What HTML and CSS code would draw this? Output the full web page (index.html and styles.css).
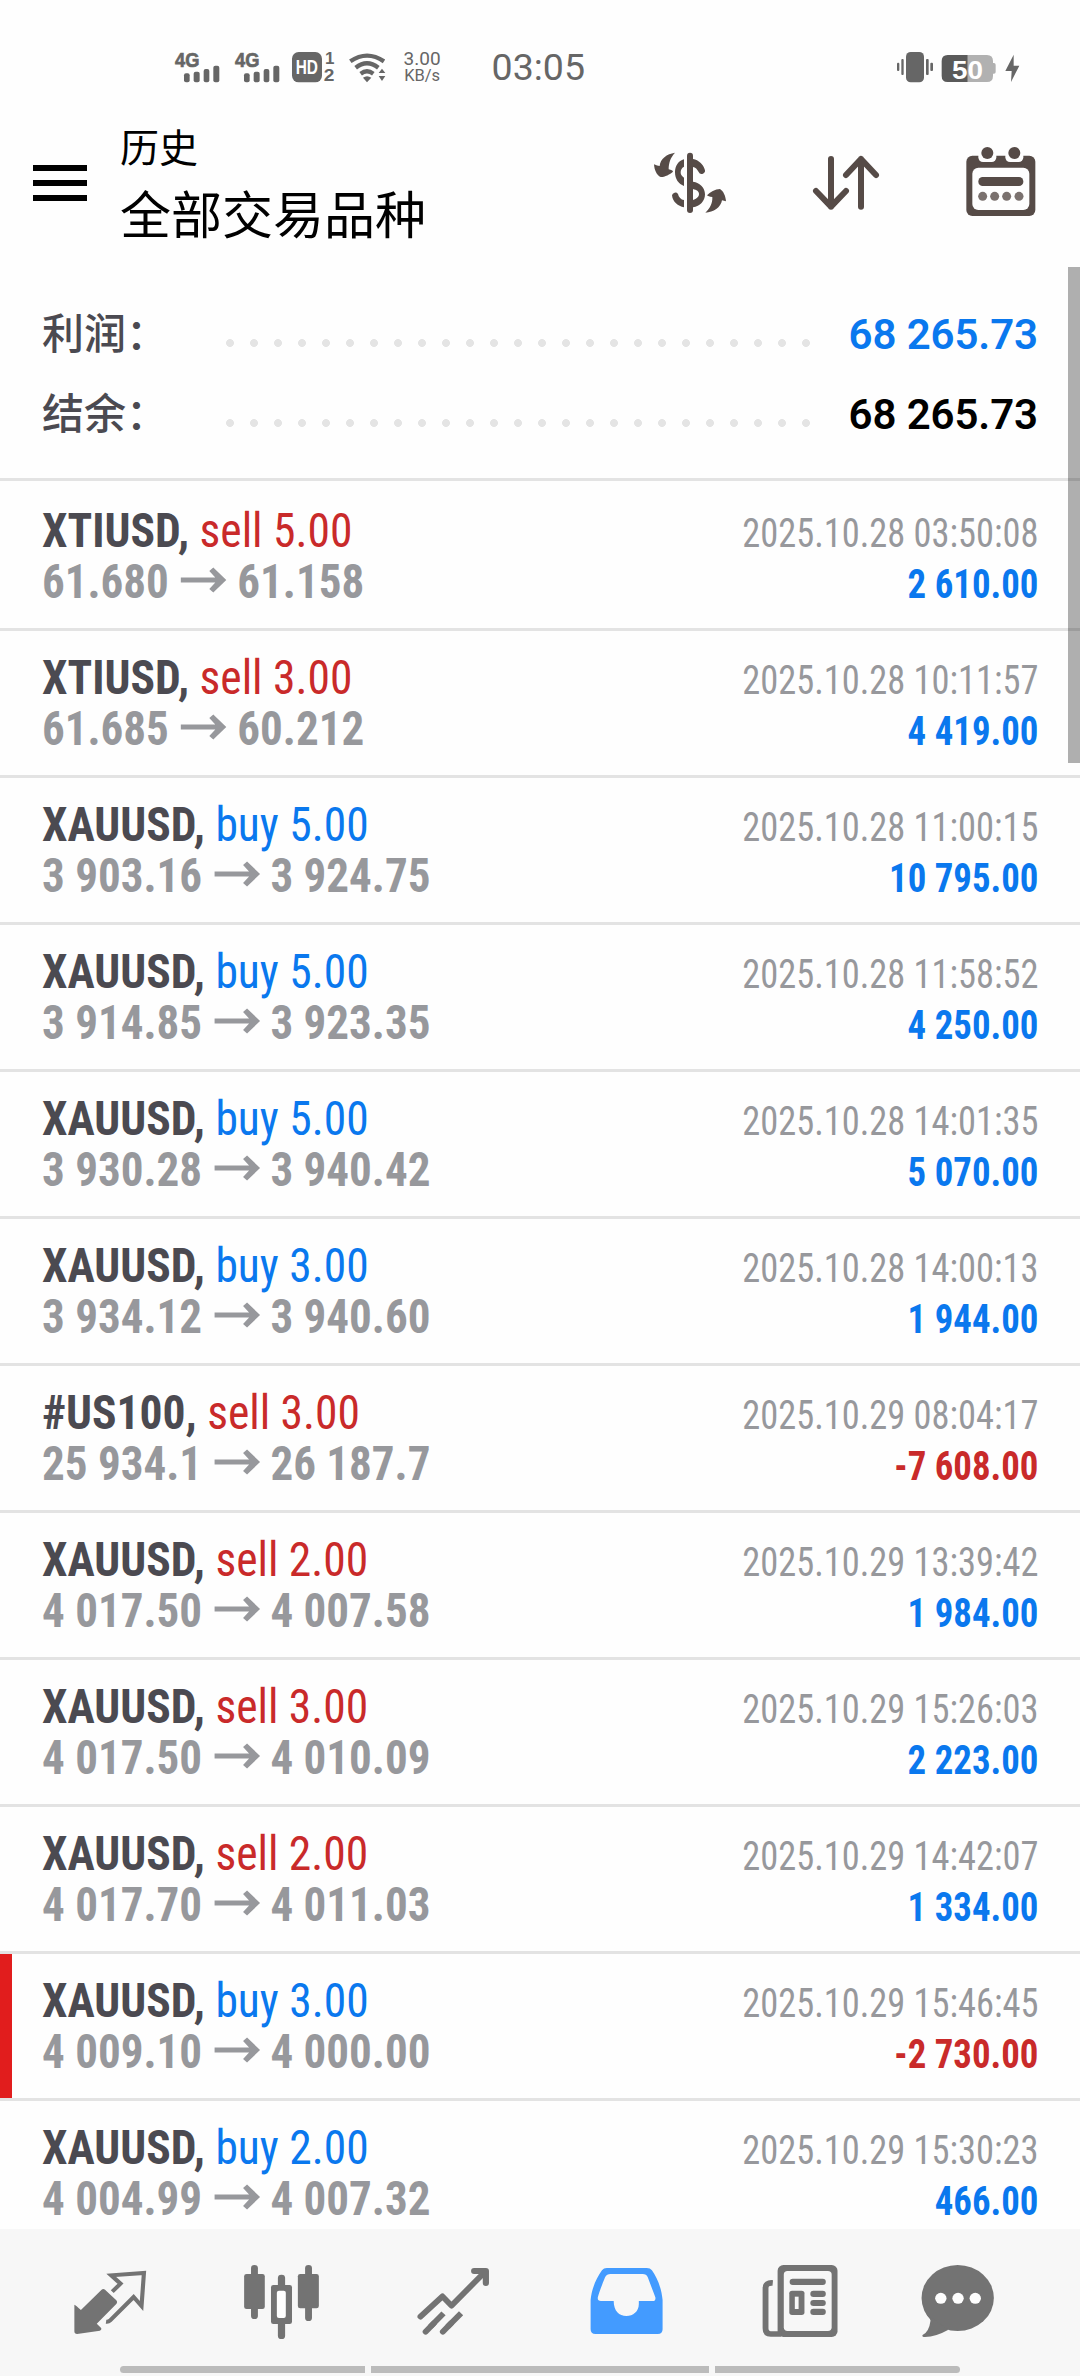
FILE: index.html
```html
<!DOCTYPE html>
<html lang="zh-CN">
<head>
<meta charset="utf-8">
<title>历史</title>
<link rel="stylesheet" href="styles.css">
</head>
<body>
<div class="screen">
  <div class="status">
    <svg class="signal" viewBox="72 60 140 100"><text x="75" y="110" class="net" textLength="73" lengthAdjust="spacingAndGlyphs">4G</text><rect x="102" y="130" width="17" height="27" rx="6"/><rect x="131" y="125" width="18" height="32" rx="6"/><rect x="161" y="117" width="17" height="40" rx="6"/><rect x="190" y="107" width="18" height="50" rx="6"/></svg>
    <svg class="signal second" viewBox="72 60 140 100"><text x="75" y="110" class="net" textLength="73" lengthAdjust="spacingAndGlyphs">4G</text><rect x="102" y="130" width="17" height="27" rx="6"/><rect x="131" y="125" width="18" height="32" rx="6"/><rect x="161" y="117" width="17" height="40" rx="6"/><rect x="190" y="107" width="18" height="50" rx="6"/></svg>
    <svg class="hd" viewBox="420 60 140 100"><rect x="426" y="66" width="90" height="91" rx="20"/><text x="437" y="132" class="hd-text" textLength="67" lengthAdjust="spacingAndGlyphs">HD</text><text x="525" y="102" class="sim">1</text><text x="521" y="154" class="sim" textLength="32" lengthAdjust="spacingAndGlyphs">2</text></svg>
    <svg class="wifi" viewBox="594 60 116 100"><g class="arc"><path d="M601 94Q651 60 702 94"/><path d="M617 113Q651 87 685 113"/><path d="M632 131Q651 117 670 131"/></g><path d="M639 143Q651 134 664 143L651 157ZM686 129L696 116L706 129ZM686 138H706L696 153Z"/></svg>
    <div class="speed"><span>3.00</span><span class="unit">KB/s</span></div>
    <div class="time">03:05</div>
    <svg class="vibrate" viewBox="108 60 114 100"><rect x="138" y="66" width="54" height="91" rx="14"/><rect x="124" y="87" width="7" height="48" rx="3"/><rect x="111" y="98" width="7" height="25" rx="3"/><rect x="198" y="87" width="8" height="48" rx="3"/><rect x="211" y="98" width="8" height="25" rx="3"/></svg>
    <svg class="battery" viewBox="244 60 166 100"><path class="rest" d="M324 75H382Q400 75 400 93V99H403Q408 99 408 104V126Q408 131 403 131H400V138Q400 156 382 156H324Z"/><path class="charge" d="M324 75H264Q246 75 246 93V138Q246 156 264 156H324Z"/><text x="277" y="146" class="level" textLength="93" lengthAdjust="spacingAndGlyphs">50</text></svg>
    <svg class="bolt" viewBox="432 60 48 100"><path d="M461 74L436 123H455L453 156L478 107H461Z"/></svg>
  </div>

  <header class="header">
    <div class="menu"><i></i><i></i><i></i></div>
    <div class="titles"><div class="title">历史</div><div class="subtitle">全部交易品种</div></div>
    <div class="actions">
      <svg viewBox="96 72 228 228"><rect x="201" y="98" width="18" height="181" rx="9"/><path d="M192 118C175 122 165 138 165 157C165 178 176 192 192 198V173C184 167 182 163 182 157C182 150 185 144 192 140ZM219 117C236 120 250 133 254 148A9 9 0 0 1 236 156C232 148 226 142 219 141ZM219 185C240 188 255 203 255 223C255 243 240 259 219 262V240C230 237 237 230 237 222C237 214 230 210 219 207ZM192 262C174 258 158 246 156 226A10 10 0 0 1 174 222C176 232 183 239 192 240ZM165 98C140 102 121 116 119 138Q112 138 102 133C103 150 110 166 122 171C135 171 150 163 159 155Q158 150 146 148C146 128 152 112 165 98ZM256 278C280 277 303 262 306 241Q312 242 318 244C317 228 310 213 300 207C286 207 270 217 261 226Q264 230 277 231C278 250 270 265 256 278Z"/></svg>
      <svg viewBox="564 72 228 228"><path class="line" d="M633 117V260M588 213L633 260L678 213M723 260V117M678 165L723 117L768 165"/></svg>
      <svg viewBox="1028 72 228 228"><rect x="1038" y="107" width="207" height="181" rx="18"/><rect class="paper" x="1056" y="143" width="171" height="127" rx="18"/><rect class="paper" x="1074" y="85" width="54" height="41" rx="14"/><rect class="paper" x="1155" y="85" width="54" height="41" rx="14"/><circle cx="1101" cy="99" r="18"/><circle cx="1182" cy="99" r="18"/><rect x="1074" y="171" width="135" height="27" rx="13"/><g class="days"><circle cx="1087" cy="229" r="13.5"/><circle cx="1123" cy="229" r="13.5"/><circle cx="1159" cy="229" r="13.5"/><circle cx="1196" cy="229" r="13.5"/></g></svg>
    </div>
  </header>

  <main class="content">
    <section class="summary">
      <div class="sum-row"><span class="label">利润：</span><span class="dots"></span><span class="amount up">68 265.73</span></div>
      <div class="sum-row"><span class="label">结余：</span><span class="dots"></span><span class="amount">68 265.73</span></div>
    </section>
    <section class="deals">
      <div class="deal"><div class="left"><div class="name">XTIUSD, <span class="sell">sell 5.00</span></div><div class="price">61.680<svg class="arrow" preserveAspectRatio="none" viewBox="0 0 46 26"><use href="#arrow"/></svg>61.158</div></div><div class="right"><div class="date">2025.10.28 03:50:08</div><div class="profit">2 610.00</div></div></div>
      <div class="deal"><div class="left"><div class="name">XTIUSD, <span class="sell">sell 3.00</span></div><div class="price">61.685<svg class="arrow" preserveAspectRatio="none" viewBox="0 0 46 26"><use href="#arrow"/></svg>60.212</div></div><div class="right"><div class="date">2025.10.28 10:11:57</div><div class="profit">4 419.00</div></div></div>
      <div class="deal"><div class="left"><div class="name">XAUUSD, <span class="buy">buy 5.00</span></div><div class="price">3 903.16<svg class="arrow" preserveAspectRatio="none" viewBox="0 0 46 26"><use href="#arrow"/></svg>3 924.75</div></div><div class="right"><div class="date">2025.10.28 11:00:15</div><div class="profit">10 795.00</div></div></div>
      <div class="deal"><div class="left"><div class="name">XAUUSD, <span class="buy">buy 5.00</span></div><div class="price">3 914.85<svg class="arrow" preserveAspectRatio="none" viewBox="0 0 46 26"><use href="#arrow"/></svg>3 923.35</div></div><div class="right"><div class="date">2025.10.28 11:58:52</div><div class="profit">4 250.00</div></div></div>
      <div class="deal"><div class="left"><div class="name">XAUUSD, <span class="buy">buy 5.00</span></div><div class="price">3 930.28<svg class="arrow" preserveAspectRatio="none" viewBox="0 0 46 26"><use href="#arrow"/></svg>3 940.42</div></div><div class="right"><div class="date">2025.10.28 14:01:35</div><div class="profit">5 070.00</div></div></div>
      <div class="deal"><div class="left"><div class="name">XAUUSD, <span class="buy">buy 3.00</span></div><div class="price">3 934.12<svg class="arrow" preserveAspectRatio="none" viewBox="0 0 46 26"><use href="#arrow"/></svg>3 940.60</div></div><div class="right"><div class="date">2025.10.28 14:00:13</div><div class="profit">1 944.00</div></div></div>
      <div class="deal"><div class="left"><div class="name">#US100, <span class="sell">sell 3.00</span></div><div class="price">25 934.1<svg class="arrow" preserveAspectRatio="none" viewBox="0 0 46 26"><use href="#arrow"/></svg>26 187.7</div></div><div class="right"><div class="date">2025.10.29 08:04:17</div><div class="profit loss">-7 608.00</div></div></div>
      <div class="deal"><div class="left"><div class="name">XAUUSD, <span class="sell">sell 2.00</span></div><div class="price">4 017.50<svg class="arrow" preserveAspectRatio="none" viewBox="0 0 46 26"><use href="#arrow"/></svg>4 007.58</div></div><div class="right"><div class="date">2025.10.29 13:39:42</div><div class="profit">1 984.00</div></div></div>
      <div class="deal"><div class="left"><div class="name">XAUUSD, <span class="sell">sell 3.00</span></div><div class="price">4 017.50<svg class="arrow" preserveAspectRatio="none" viewBox="0 0 46 26"><use href="#arrow"/></svg>4 010.09</div></div><div class="right"><div class="date">2025.10.29 15:26:03</div><div class="profit">2 223.00</div></div></div>
      <div class="deal"><div class="left"><div class="name">XAUUSD, <span class="sell">sell 2.00</span></div><div class="price">4 017.70<svg class="arrow" preserveAspectRatio="none" viewBox="0 0 46 26"><use href="#arrow"/></svg>4 011.03</div></div><div class="right"><div class="date">2025.10.29 14:42:07</div><div class="profit">1 334.00</div></div></div>
      <div class="deal stopped"><div class="left"><div class="name">XAUUSD, <span class="buy">buy 3.00</span></div><div class="price">4 009.10<svg class="arrow" preserveAspectRatio="none" viewBox="0 0 46 26"><use href="#arrow"/></svg>4 000.00</div></div><div class="right"><div class="date">2025.10.29 15:46:45</div><div class="profit loss">-2 730.00</div></div></div>
      <div class="deal"><div class="left"><div class="name">XAUUSD, <span class="buy">buy 2.00</span></div><div class="price">4 004.99<svg class="arrow" preserveAspectRatio="none" viewBox="0 0 46 26"><use href="#arrow"/></svg>4 007.32</div></div><div class="right"><div class="date">2025.10.29 15:30:23</div><div class="profit">466.00</div></div></div>
    </section>
    <div class="scrollbar"></div>
  </main>

  <footer class="footer">
    <nav class="tabs">
      <svg preserveAspectRatio="none" viewBox="203.3 126 232.3 240"><path d="M216 254Q220 255 235 270L295 209Q300 205 305 209L337 240Q343 246 337 253L281 311L293 323Q297 327 290 332L224 342Q216 342 216 334Z"/><path class="thin" d="M326 215L350 191L323 166L418 159L411 258L388 231L320 301Q315 306 308 305"/></svg>
      <svg preserveAspectRatio="none" viewBox="702.8 126 232.3 240"><rect x="729" y="135" width="20" height="162" rx="10"/><rect x="709" y="162" width="60" height="105" rx="7"/><rect x="807" y="164" width="21" height="193" rx="10"/><rect x="787" y="195" width="61" height="117" rx="7"/><rect class="white" x="804" y="212" width="26" height="82" rx="6"/><rect x="886" y="135" width="20" height="168" rx="10"/><rect x="865" y="162" width="61" height="103" rx="7"/></svg>
      <svg preserveAspectRatio="none" viewBox="1202.3 126 232.3 240"><g class="trend"><path d="M1221 290L1285 229L1311 257L1408 156"/><path class="head" d="M1377 153H1411V189"/><path d="M1236 335L1260 310M1286 335L1310 310"/><path class="cut" d="M1250 320L1288 280M1300 320L1339 280"/></g></svg>
      <svg preserveAspectRatio="none" viewBox="133.6 126 232.3 240"><path class="active" d="M147 240C150 205 165 172 180 151Q185 144 194 144H310Q320 144 325 151C340 172 353 205 356 240V328Q356 342 342 342H161Q147 342 147 328Z"/><path class="hole" d="M205 162H298Q309 162 313 172L335 232Q337 243 327 243H287V252C287 275 270 288 251 288C230 288 214 273 214 243H177Q166 243 168 232C172 215 182 190 189 172Q194 162 205 162Z"/></svg>
      <svg preserveAspectRatio="none" viewBox="633.1 126 232.3 240"><rect x="690" y="135" width="174" height="216" rx="17"/><rect class="hole" x="708" y="153" width="139" height="180" rx="11"/><path class="back" d="M676 189Q655 187 655 205V325Q655 342 670 342H700"/><rect x="725" y="176" width="105" height="19" rx="9"/><rect x="724" y="212" width="44" height="73" rx="8"/><rect class="hole" x="740" y="230" width="11" height="37"/><rect x="785" y="212" width="45" height="19" rx="9"/><rect x="785" y="240" width="45" height="18" rx="9"/><rect x="785" y="266" width="45" height="19" rx="9"/></svg>
      <svg preserveAspectRatio="none" viewBox="1091.9 126 232.3 240"><ellipse cx="1213" cy="234" rx="105" ry="99"/><path d="M1122 282Q1134 296 1134 302Q1130 335 1111 345Q1108 351 1118 351Q1150 350 1186 329Z"/><g class="white"><circle cx="1164" cy="235" r="16.5"/><circle cx="1214" cy="235" r="16.5"/><circle cx="1264" cy="235" r="16.5"/></g></svg>
    </nav>
    <div class="keys"><i></i><i></i><i></i></div>
  </footer>
</div>
<svg class="defs"><defs><path id="arrow" d="M0 10.5H34.5L28.5 4L32.5 0.5L45.5 13L32.5 25.5L28.5 22L34.5 15.5H0Z"/></defs></svg>
</body>
</html>
```
FILE: styles.css
```css
* { box-sizing: border-box; }
body { margin: 0; background: #fefefe; font-family: Roboto, "Noto Sans CJK SC", sans-serif; }
svg { display: block; flex: none; overflow: visible; }
.defs { display: none; }
.screen { width: 1080px; height: 2376px; display: flex; flex-direction: column; overflow: hidden; }

.status { height: 110px; padding: 50px 60px 0 174px; display: flex; align-items: flex-start; fill: #666; color: #666; }
.status svg { height: 33.33px; }
.signal { width: 46.67px; }
.second { margin-left: 13.33px; }
.net { font: bold 59px "Liberation Sans", sans-serif; stroke: #666; stroke-width: 2; }
.hd { width: 46.67px; margin-left: 9.33px; }
.hd-text { font: bold 58px "Liberation Sans", sans-serif; fill: #fff; }
.sim { font: bold 51px "Liberation Sans", sans-serif; }
.wifi { width: 38.67px; margin-left: 11.33px; }
.arc { fill: none; stroke: #666; stroke-width: 13; }
.speed { width: 37px; margin-left: 17px; display: flex; flex-direction: column; align-items: center; font-size: 19px; line-height: 18px; }
.unit { font-size: 16.5px; line-height: 16px; }
.time { margin: -5px auto 0 51px; font-size: 37.5px; line-height: 44px; }
.vibrate { width: 38px; }
.battery { width: 55.33px; margin-left: 7.33px; }
.rest { fill: #b1b1b1; }
.charge { fill: #5a5a5a; }
.level { font: bold 80px "Liberation Sans", sans-serif; fill: #fff; }
.bolt { width: 16px; margin-left: 7.33px; }

.header { height: 157px; padding: 0 41px 13px 33px; display: flex; align-items: center; }
.menu { width: 54px; display: grid; gap: 9px; padding-top: 2px; }
.menu i { height: 6px; background: #000; }
.titles { margin-left: 33px; padding-top: 12px; color: #000; }
.title { font-size: 39px; line-height: 58px; }
.subtitle { font-size: 51px; line-height: 78px; }
.actions { margin-left: auto; display: flex; gap: 79.5px; fill: #564b47; }
.actions svg { width: 76px; height: 76px; }
.line { fill: none; stroke: #564b47; stroke-width: 18; stroke-linecap: round; stroke-linejoin: round; }
.paper { fill: #fefefe; }
.days { fill: #7a716e; }

.content { position: relative; flex: 1; min-height: 0; overflow: hidden; }
.summary { height: 214px; padding: 27px 42px 0; border-bottom: 3px solid #e3e3e3; font-size: 42px; }
.sum-row { height: 80px; display: flex; align-items: center; }
.label { width: 176px; padding-bottom: 7px; color: #4b4a51; font-weight: 500; }
.dots { width: 600px; height: 8px; margin-top: 18px; background: radial-gradient(circle at 12px 4px, #e4e4e4 3.6px, transparent 4.3px) 0 0 / 24px 8px repeat-x; }
.amount { margin-left: auto; color: #000; font-weight: 650; letter-spacing: -0.1px; }
.up { color: #0a78ee; }
.deals { padding-top: 3px; }
.deal { height: 147px; padding: 21px 42px 0; border-bottom: 3px solid #e3e3e3; display: flex; justify-content: space-between; font-family: "Roboto Condensed", Roboto, sans-serif; font-stretch: 75%; line-height: 51px; white-space: nowrap; }
.stopped { background: linear-gradient(#e11d1d, #e11d1d) 0 0 / 12px 100% no-repeat; }
.name { font-size: 48px; font-weight: 700; color: #4b4a51; transform: scaleX(.948); transform-origin: left; }
.name span { font-weight: 400; }
.sell { color: #c92a2a; }
.buy { color: #0a78ee; }
.price { display: flex; font-size: 48px; font-weight: 700; color: #97989c; transform: scaleX(.938); transform-origin: left; }
.arrow { width: 49px; height: 26px; margin: 11px 11px 0 13px; fill: #97989c; }
.right { padding-top: 3px; text-align: right; font-size: 40px; }
.date { color: #97989c; transform: scaleX(.91); transform-origin: right; }
.profit { font-weight: 700; color: #0a78ee; transform: scaleX(.92); transform-origin: right; }
.loss { color: #c92a2a; }
.scrollbar { position: absolute; top: 0; right: 0; width: 12px; height: 496px; background: rgba(0,0,0,.31); }

.footer { height: 147px; padding-top: 33px; background: #f7f7f7; }
.tabs { padding-left: 24px; display: grid; grid-template-columns: repeat(5, 172px) 144px; justify-items: center; fill: #737373; }
.tabs svg { width: 80px; height: 80px; }
.thin { fill: none; stroke: #737373; stroke-width: 12; }
.white { fill: #fefefe; }
.trend { fill: none; stroke: #737373; stroke-width: 17; stroke-linecap: round; stroke-linejoin: round; }
.head { stroke-width: 18; }
.cut { stroke-linecap: butt; }
.active { fill: #439bff; }
.hole { fill: #f7f7f7; }
.back { fill: none; stroke: #737373; stroke-width: 17; }
.keys { margin: 24px 120px 0; display: grid; grid-template-columns: 245px 338px 245px; gap: 6px; }
.keys i { height: 7px; background: #bbb; }
.keys i:first-child { border-radius: 4px 0 0 4px; }
.keys i:last-child { border-radius: 0 4px 4px 0; }
```
